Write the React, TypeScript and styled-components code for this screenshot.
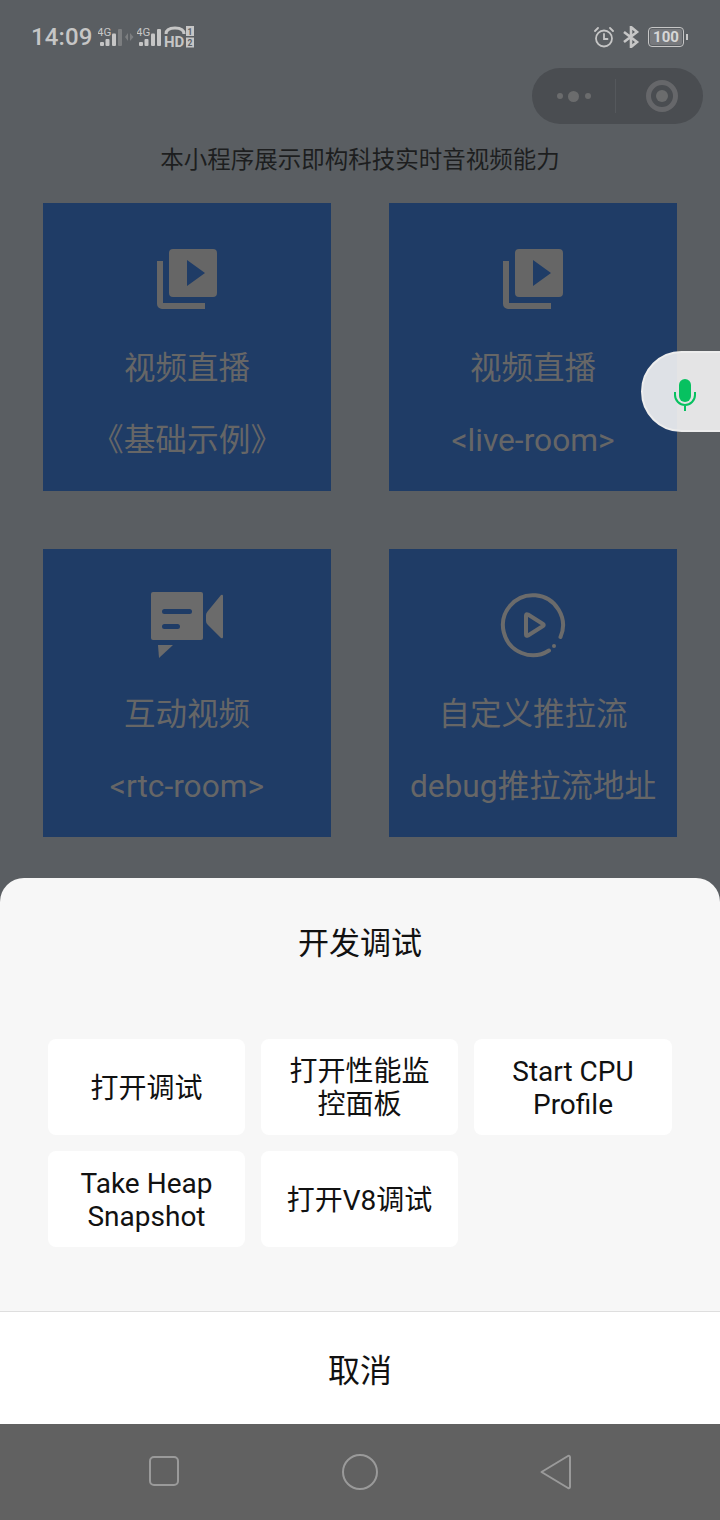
import React from "react";
import styled, { createGlobalStyle } from "styled-components";

const FONT = `Roboto, "Noto Sans CJK SC", sans-serif`;

const GlobalStyle = createGlobalStyle`
	html, body {
		margin: 0;
		padding: 0;
		background: #5a5e62;
		font-family: ${FONT};
	}
`;

const Screen = styled.div`
	position: relative;
	display: flex;
	flex-direction: column;
	width: 720px;
	height: 1520px;
	overflow: hidden;
	background: #5a5e62;
`;

const Main = styled.main`
	height: 878px;
	flex: none;
`;

const StatusBar = styled.div`
	display: flex;
	justify-content: space-between;
	align-items: center;
	height: 68px;
	padding: 6px 36px 0 31px;
	box-sizing: border-box;
	color: #c6c6c6;
`;

const StatusGroup = styled.div<{ $gap: number }>`
	display: flex;
	align-items: center;
	gap: ${(p) => p.$gap}px;
`;

const Clock = styled.span`
	font-size: 24px;
	font-weight: 500;
	letter-spacing: 0.1px;
	margin-right: 3px;
`;

const Battery = styled.div`
	display: flex;
	align-items: center;
	justify-content: center;
	width: 36px;
	height: 20px;
	box-sizing: border-box;
	border: 1px solid #c6c6c6;
	border-radius: 4px;
	background: #77797d;
	background-clip: content-box;
	padding: 1px;
	font-size: 15px;
	font-weight: 700;
	line-height: 1;
	color: #d6d6d6;
	position: relative;
	&::after {
		content: "";
		position: absolute;
		right: -5px;
		top: 6px;
		width: 2px;
		height: 6px;
		background: #c6c6c6;
	}
`;

const CapsuleRow = styled.div`
	display: flex;
	justify-content: flex-end;
	padding-right: 17px;
`;

const Capsule = styled.div`
	display: flex;
	align-items: center;
	width: 171px;
	height: 56px;
	border-radius: 28px;
	background: #4a4d51;
`;

const CapsuleHalf = styled.div`
	flex: 1;
	height: 34px;
	display: flex;
	align-items: center;
	justify-content: center;
	& + & {
		border-left: 1px solid #55585c;
		padding-left: 4px;
	}
`;

const Dot = styled.span<{ $big?: boolean }>`
	width: ${(p) => (p.$big ? 11 : 6)}px;
	height: ${(p) => (p.$big ? 11 : 6)}px;
	border-radius: 50%;
	background: #6b6c6d;
	margin: 0 2.75px;
`;

const Ring = styled.span`
	width: 32px;
	height: 32px;
	box-sizing: border-box;
	border: 5px solid #66676a;
	border-radius: 50%;
	display: flex;
	align-items: center;
	justify-content: center;
	&::after {
		content: "";
		width: 12px;
		height: 12px;
		border-radius: 50%;
		background: #6b6c6d;
	}
`;

const Heading = styled.div`
	margin-top: 20px;
	text-align: center;
	font-size: 23.5px;
	line-height: 32px;
	color: #1d1e1f;
`;

const Grid = styled.div`
	display: grid;
	grid-template-columns: 288px 288px;
	gap: 58px;
	padding: 27px 0 0 43px;
`;

const Card = styled.div`
	width: 288px;
	height: 288px;
	padding-top: 40px;
	box-sizing: border-box;
	background: #1f3c66;
	color: #666666;
	text-align: center;
`;

const IconSlot = styled.div`
	height: 72px;
	display: flex;
	align-items: center;
	justify-content: center;
`;

const CardTitle = styled.div`
	margin-top: 18px;
	font-size: 31.5px;
	line-height: 72px;
`;

const CardSub = styled.div`
	font-size: 31.7px;
	line-height: 72px;
	white-space: nowrap;
`;

const MicTab = styled.div`
	position: absolute;
	left: 641px;
	top: 351px;
	width: 90px;
	height: 81px;
	box-sizing: border-box;
	padding: 6px 0 0 31px;
	display: flex;
	align-items: center;
	border: 2px solid #ededed;
	border-radius: 41px 0 0 41px;
	background: rgba(243, 243, 244, 0.9);
`;

const Sheet = styled.section`
	flex: none;
	height: 546px;
	display: flex;
	flex-direction: column;
	border-radius: 24px 24px 0 0;
	background: #f7f7f7;
	overflow: hidden;
`;

const SheetTitle = styled.div`
	padding-top: 44px;
	height: 118px;
	box-sizing: border-box;
	text-align: center;
	font-size: 31px;
	line-height: 44px;
	color: #111111;
`;

const Actions = styled.div`
	display: grid;
	grid-template-columns: 197px 197px 198px;
	grid-auto-rows: 96px;
	gap: 16px;
	padding: 43px 48px 0;
	flex: 1;
`;

const Action = styled.div`
	display: flex;
	align-items: center;
	justify-content: center;
	padding: 2px 20px 0;
	border-radius: 8px;
	background: #ffffff;
	text-align: center;
	font-size: 28px;
	line-height: 33px;
	color: #111111;
`;

const Cancel = styled.div`
	height: 113px;
	box-sizing: border-box;
	display: flex;
	align-items: center;
	justify-content: center;
	border-top: 1px solid #dedede;
	background: #ffffff;
	font-size: 32px;
	color: #111111;
`;

const NavBar = styled.nav`
	flex: 1;
	display: flex;
	align-items: center;
	justify-content: center;
	gap: 156px;
	background: #616161;
`;

const NavIcon = styled.svg`
	width: 40px;
	height: 40px;
	fill: none;
	stroke: #9a9a9a;
	stroke-width: 2;
	stroke-linejoin: round;
`;

const LibraryIcon = () => (
	<svg width="60" height="60" viewBox="0 0 60 60" fill="#666666">
		<path d="M0 12h6v42h42v6H5a5 5 0 0 1-5-5z" />
		<path fillRule="evenodd" d="M16 0h40a4 4 0 0 1 4 4v40a4 4 0 0 1-4 4H16a4 4 0 0 1-4-4V4a4 4 0 0 1 4-4zM30 11v26l18-13z" />
	</svg>
);

const CameraIcon = () => (
	<svg width="72" height="66" viewBox="0 0 72 66" fill="#6b6b6b">
		<path fillRule="evenodd" d="M2 0h48a2 2 0 0 1 2 2v44a2 2 0 0 1-2 2H2a2 2 0 0 1-2-2V2a2 2 0 0 1 2-2zM13.500 17a2.500 2.500 0 0 0 0 5h25a2.500 2.500 0 0 0 0-5zM13.500 32a2.500 2.500 0 0 0 0 5h13a2.500 2.500 0 0 0 0-5z" />
		<path d="M7 53h15L8 66z" />
		<path d="M55 29v-6q0-2 1.500-3.500L70 3q2-1 2 1v41q0 2-2 1L56.500 32.500Q55 31 55 29z" />
	</svg>
);

const PlayCircleIcon = () => (
	<svg width="66" height="66" viewBox="0 0 66 66" fill="none" stroke="#6b6b6b" strokeWidth="4" strokeLinecap="round" strokeLinejoin="round">
		<path d="M49 58.500A30 30 0 1 1 60.500 45" />
		<circle cx="54" cy="54" r="2" fill="#6b6b6b" stroke="none" />
		<path d="M26 23.500v19q0 2 2 1l15-9.500q1.500-1 0-2l-15-9.500q-2-1-2 1z" />
	</svg>
);

const Signal = ({ full }: { full?: boolean }) => (
	<svg width="24" height="20" viewBox="0 0 24 20">
		<text x="-1" y="9" fontSize="11.500" fill="#c6c6c6" fontFamily="Roboto, sans-serif">4G</text>
		<rect x="2" y="15" width="4" height="4" rx="1" fill="#c6c6c6" />
		<rect x="7.500" y="12" width="4" height="7" rx="1" fill="#c6c6c6" />
		<rect x="14" y="6.500" width="4" height="12.500" rx="1" fill="#c6c6c6" />
		<rect x="20" y="2" width="4" height="17" rx="1" fill={full ? "#c6c6c6" : "#7c7e80"} />
	</svg>
);

const DataArrows = () => (
	<svg width="9" height="8" viewBox="0 0 9 8" fill="#7c7e80">
		<path d="M0 4l3-4v8zM5 0l3.500 4L5 8z" />
	</svg>
);

const HdIcon = () => (
	<svg width="31" height="24" viewBox="0 0 31 24">
		<path d="M2 9q0-6 9-6t9 6" fill="none" stroke="#c6c6c6" strokeWidth="3" />
		<text x="0" y="22" fontSize="15" fontWeight="700" fill="#c6c6c6" fontFamily="Roboto, sans-serif">HD</text>
		<rect x="22" y="1" width="8" height="10" fill="#c6c6c6" />
		<rect x="22" y="12.500" width="8" height="10" fill="#c6c6c6" />
		<text x="26" y="9.500" fontSize="8.500" fontWeight="700" textAnchor="middle" fill="#5a5e62" fontFamily="Roboto, sans-serif">1</text>
		<text x="26" y="21" fontSize="8.500" fontWeight="700" textAnchor="middle" fill="#5a5e62" fontFamily="Roboto, sans-serif">2</text>
	</svg>
);

const AlarmIcon = () => (
	<svg width="20" height="22" viewBox="0 0 20 22" fill="none" stroke="#c6c6c6" strokeWidth="1.800" strokeLinecap="round">
		<circle cx="10" cy="12.500" r="8" />
		<path d="M10 8v5h3.500M1 5l3-3M19 5l-3-3" />
	</svg>
);

const BluetoothIcon = () => (
	<svg width="18" height="22" viewBox="0 0 18 22" fill="none" stroke="#c6c6c6" strokeWidth="2.600">
		<path d="M2 6l13 10-6 5V1l6 5L2 16" />
	</svg>
);

const MicIcon = () => (
	<svg width="22" height="32" viewBox="0 0 22 32" fill="none">
		<rect x="5" y="0" width="12" height="23" rx="6" fill="#07c160" />
		<path d="M1 13v3a10 10 0 0 0 20 0v-3M11 26v6" stroke="#07c160" strokeWidth="2" />
	</svg>
);

const cards = [
	{ icon: <LibraryIcon />, title: "视频直播", sub: "《基础示例》" },
	{ icon: <LibraryIcon />, title: "视频直播", sub: "<live-room>" },
	{ icon: <CameraIcon />, title: "互动视频", sub: "<rtc-room>" },
	{ icon: <PlayCircleIcon />, title: "自定义推拉流", sub: "debug推拉流地址" },
];

const actions = [
	"打开调试",
	"打开性能监控面板",
	"Start CPU Profile",
	"Take Heap Snapshot",
	"打开V8调试",
];

const App = () => (
	<Screen>
		<GlobalStyle />
		<Main>
			<StatusBar>
				<StatusGroup $gap={3}>
					<Clock>14:09</Clock>
					<Signal />
					<DataArrows />
					<Signal full />
					<HdIcon />
				</StatusGroup>
				<StatusGroup $gap={8}>
					<AlarmIcon />
					<BluetoothIcon />
					<Battery>100</Battery>
				</StatusGroup>
			</StatusBar>
			<CapsuleRow>
				<Capsule>
					<CapsuleHalf>
						<Dot />
						<Dot $big />
						<Dot />
					</CapsuleHalf>
					<CapsuleHalf>
						<Ring />
					</CapsuleHalf>
				</Capsule>
			</CapsuleRow>
			<Heading>本小程序展示即构科技实时音视频能力</Heading>
			<Grid>
				{cards.map((card) => (
					<Card key={card.sub}>
						<IconSlot>{card.icon}</IconSlot>
						<CardTitle>{card.title}</CardTitle>
						<CardSub>{card.sub}</CardSub>
					</Card>
				))}
			</Grid>
		</Main>
		<MicTab>
			<MicIcon />
		</MicTab>
		<Sheet>
			<SheetTitle>开发调试</SheetTitle>
			<Actions>
				{actions.map((action) => (
					<Action key={action}>{action}</Action>
				))}
			</Actions>
			<Cancel>取消</Cancel>
		</Sheet>
		<NavBar>
			<NavIcon viewBox="0 0 40 40">
				<rect x="6" y="5" width="28" height="28" rx="4" />
			</NavIcon>
			<NavIcon viewBox="0 0 40 40">
				<circle cx="20" cy="20" r="17" />
			</NavIcon>
			<NavIcon viewBox="0 0 40 40">
				<path d="M5.500 20L32 4q2-.8 2 1.500v29q0 2.300-2 1.500z" />
			</NavIcon>
		</NavBar>
	</Screen>
);

export default App;
